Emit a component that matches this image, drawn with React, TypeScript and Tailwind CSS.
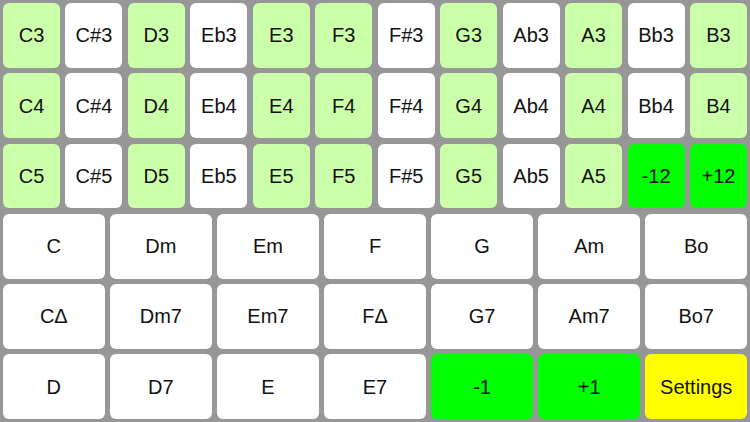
import React from "react";

const LG = "bg-[#ccffaa]";
const W = "bg-white";
const G = "bg-[#00ff00]";
const Y = "bg-[#ffff00]";

const noteRows: [string, string][][] = [3, 4, 5].map((o) => {
  const names = ["C", "C#", "D", "Eb", "E", "F", "F#", "G", "Ab", "A", "Bb", "B"];
  const light = [true, false, true, false, true, true, false, true, false, true, false, true];
  return names.map((n, i) => [n + o, light[i] ? LG : W] as [string, string]);
});
noteRows[2][10] = ["-12", G];
noteRows[2][11] = ["+12", G];

const chordRows: [string, string][][] = [
  ["C", "Dm", "Em", "F", "G", "Am", "Bo"].map((t) => [t, W] as [string, string]),
  ["CΔ", "Dm7", "Em7", "FΔ", "G7", "Am7", "Bo7"].map((t) => [t, W] as [string, string]),
  [
    ["D", W],
    ["D7", W],
    ["E", W],
    ["E7", W],
    ["-1", G],
    ["+1", G],
    ["Settings", Y],
  ],
];

function Cell({ label, bg }: { label: string; bg: string }) {
  return (
    <div className={`${bg} rounded-[6px] flex items-center justify-center text-[20px] text-[#111]`}>
      {label}
    </div>
  );
}

export default function App() {
  return (
    <div
      className="w-[750px] h-[422px] bg-[#979797] p-[3px] grid grid-rows-6 gap-y-[5.5px] overflow-hidden"
      style={{ fontFamily: '"Liberation Sans", Arial, sans-serif' }}
    >
      {noteRows.map((row, r) => (
        <div key={"n" + r} className="grid grid-cols-12 gap-x-[5.5px]">
          {row.map(([l, b], i) => (
            <Cell key={i} label={l} bg={b} />
          ))}
        </div>
      ))}
      {chordRows.map((row, r) => (
        <div key={"c" + r} className="grid grid-cols-7 gap-x-[5.5px]">
          {row.map(([l, b], i) => (
            <Cell key={i} label={l} bg={b} />
          ))}
        </div>
      ))}
    </div>
  );
}
